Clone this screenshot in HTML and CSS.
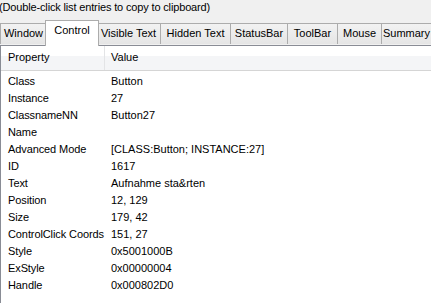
FILE: index.html
```html
<!DOCTYPE html>
<html lang="en">

<head>
    <meta charset="UTF-8">
    <title>Window Spy - Control</title>
    <link rel="stylesheet" href="styles.css">
</head>

<body>
    <div class="hint">(Double-click list entries to copy to clipboard)</div>

    <div class="tabs">
        <div class="tab t-window">Window</div>
        <div class="tab t-control active">Control</div>
        <div class="tab t-visible">Visible Text</div>
        <div class="tab t-hidden">Hidden Text</div>
        <div class="tab t-status">StatusBar</div>
        <div class="tab t-tool">ToolBar</div>
        <div class="tab t-mouse">Mouse</div>
        <div class="tab t-summary">Summary</div>
    </div>

    <div class="list">
        <div class="head">
            <div class="col prop">Property</div>
            <div class="col val">Value</div>
        </div>
        <div class="rows">
            <div class="row"><span class="prop">Class</span><span class="val">Button</span></div>
            <div class="row"><span class="prop">Instance</span><span class="val">27</span></div>
            <div class="row"><span class="prop">ClassnameNN</span><span class="val">Button27</span></div>
            <div class="row"><span class="prop">Name</span><span class="val"></span></div>
            <div class="row"><span class="prop">Advanced Mode</span><span class="val">[CLASS:Button; INSTANCE:27]</span></div>
            <div class="row"><span class="prop">ID</span><span class="val">1617</span></div>
            <div class="row"><span class="prop">Text</span><span class="val">Aufnahme sta&amp;rten</span></div>
            <div class="row"><span class="prop">Position</span><span class="val">12, 129</span></div>
            <div class="row"><span class="prop">Size</span><span class="val">179, 42</span></div>
            <div class="row"><span class="prop">ControlClick Coords</span><span class="val">151, 27</span></div>
            <div class="row"><span class="prop">Style</span><span class="val">0x5001000B</span></div>
            <div class="row"><span class="prop">ExStyle</span><span class="val">0x00000004</span></div>
            <div class="row"><span class="prop">Handle</span><span class="val">0x000802D0</span></div>
        </div>
    </div>
</body>

</html>
```

FILE: styles.css
```css
html,
body {
    margin: 0;
    height: 100%;
}

body {
    background: #f0f0f0;
    font-family: "Liberation Sans", Arial, sans-serif;
    font-size: 11px;
    color: #000;
    overflow: hidden;
    display: flex;
    flex-direction: column;
    white-space: nowrap;
}

.hint {
    height: 20px;
    line-height: 14px;
    margin-left: -1px;
    letter-spacing: -0.15px;
}

.tabs {
    display: flex;
    height: 25px;
    flex-shrink: 0;
    position: relative;
    z-index: 1;
}

.tab {
    box-sizing: border-box;
    margin-top: 3px;
    height: 21px;
    line-height: 19px;
    text-align: center;
    border: 1px solid #acacac;
    border-bottom: 0;
    background: linear-gradient(#f2f2f2, #e5e5e5);
    flex-shrink: 0;
}

.tab + .tab {
    border-left: 0;
}

.tab.active {
    margin: 0 -2px;
    height: 26px;
    line-height: 19px;
    background: #fff;
    border-left: 1px solid #acacac;
    position: relative;
    z-index: 2;
}

.tab.active + .tab {
    border-left: 0;
}

.t-window { width: 47px; }
.t-control { width: 54px; }
.t-visible { width: 64px; }
.t-hidden { width: 70px; }
.t-status { width: 57px; }
.t-tool { width: 50px; }
.t-mouse { width: 44px; }
.t-summary { width: 50px; }

.list {
    flex: 1;
    background: #fff;
    border-top: 1px solid #898c95;
    border-left: 1px solid #898c95;
}

.head {
    display: flex;
    height: 24px;
    line-height: 23px;
    border-bottom: 1px solid #d5d5d5;
    background: linear-gradient(#fff 0, #fff 40%, #f4f5f7 41%, #f4f5f7 100%);
}

.head .col {
    box-sizing: border-box;
    padding-left: 7px;
}

.head .prop {
    width: 104px;
    border-right: 1px solid #e3e4e6;
}

.head .val {
    padding-left: 6px;
}

.rows {
    padding-top: 2px;
}

.row {
    display: flex;
    height: 17px;
    line-height: 17px;
}

.row .prop {
    width: 103px;
    padding-left: 7px;
    box-sizing: border-box;
    letter-spacing: -0.1px;
}

.row .val {
    padding-left: 7px;
}
```
